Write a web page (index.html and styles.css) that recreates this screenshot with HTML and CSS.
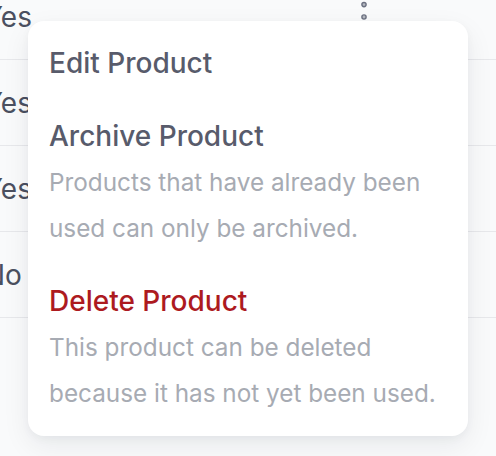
FILE: index.html
```html
<!DOCTYPE html>
<html lang="en">
<head>
<meta charset="utf-8">
<title>Product actions</title>
<link rel="stylesheet" href="styles.css">
</head>
<body>
<div class="page">
  <div class="table">
    <div class="row">
      <span class="cell">Yes</span>
      <svg class="kebab" width="12" height="38" viewBox="0 0 12 38" aria-hidden="true">
        <circle cx="6" cy="6.6" r="2.1"/>
        <circle cx="6" cy="19" r="2.1"/>
        <circle cx="6" cy="31.4" r="2.1"/>
      </svg>
    </div>
    <div class="row">
      <span class="cell">Yes</span>
      <svg class="kebab" width="12" height="38" viewBox="0 0 12 38" aria-hidden="true">
        <circle cx="6" cy="6.6" r="2.1"/>
        <circle cx="6" cy="19" r="2.1"/>
        <circle cx="6" cy="31.4" r="2.1"/>
      </svg>
    </div>
    <div class="row">
      <span class="cell">Yes</span>
      <svg class="kebab" width="12" height="38" viewBox="0 0 12 38" aria-hidden="true">
        <circle cx="6" cy="6.6" r="2.1"/>
        <circle cx="6" cy="19" r="2.1"/>
        <circle cx="6" cy="31.4" r="2.1"/>
      </svg>
    </div>
    <div class="row">
      <span class="cell">No</span>
      <svg class="kebab" width="12" height="38" viewBox="0 0 12 38" aria-hidden="true">
        <circle cx="6" cy="6.6" r="2.1"/>
        <circle cx="6" cy="19" r="2.1"/>
        <circle cx="6" cy="31.4" r="2.1"/>
      </svg>
    </div>
  </div>

  <div class="menu" role="menu">
    <div class="item" role="menuitem">
      <div class="title">Edit Product</div>
    </div>
    <div class="item" role="menuitem">
      <div class="title">Archive Product</div>
      <div class="desc">Products that have already been used can only be archived.</div>
    </div>
    <div class="item" role="menuitem">
      <div class="title danger">Delete Product</div>
      <div class="desc">This product can be deleted because it has not yet been used.</div>
    </div>
  </div>
</div>
</body>
</html>
```

FILE: styles.css
```css
* {
  box-sizing: border-box;
}

html, body {
  margin: 0;
  padding: 0;
}

body {
  background: #f9fafb;
  font-family: Inter, "Noto Sans", "Liberation Sans", sans-serif;
  width: 496px;
  height: 456px;
  overflow: hidden;
}

.page {
  position: relative;
  display: flow-root;
  width: 496px;
  height: 456px;
}

.table {
  margin-top: -26px;
  display: flex;
  flex-direction: column;
}

.row {
  height: 86px;
  border-bottom: 1px solid #e7e8eb;
  display: flex;
  align-items: center;
  justify-content: space-between;
  padding-right: 126px;
}

.cell {
  margin-left: -16px;
  font-size: 28px;
  color: #4b5060;
  line-height: 1;
}

.kebab {
  display: block;
  margin-top: 1px;
}

.kebab circle {
  fill: #b4b8c0;
  stroke: #6b7080;
  stroke-width: 1.4;
}

.menu {
  position: absolute;
  left: 28px;
  top: 21px;
  width: 440px;
  background: #ffffff;
  border-radius: 16px;
  padding: 6px 0;
  box-shadow: 0 10px 28px rgba(17, 24, 39, 0.07), 0 3px 8px rgba(17, 24, 39, 0.04);
}

.item {
  padding: 14px 21px;
}

.title {
  font-size: 28px;
  line-height: 45px;
  font-weight: 500;
  color: #585b6b;
}

.title.danger {
  color: #ad1a1f;
}

.desc {
  font-size: 24.3px;
  line-height: 46px;
  color: #a7abb3;
}
```
